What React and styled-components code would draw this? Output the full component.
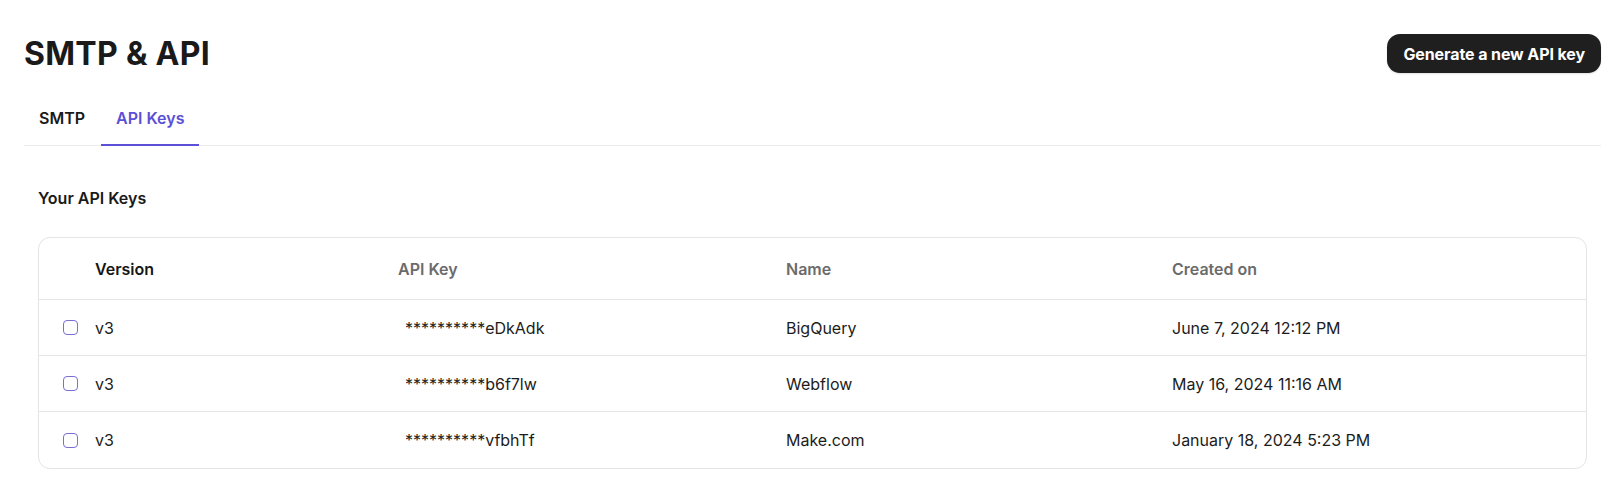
import React from "react";
import styled, { createGlobalStyle } from "styled-components";

const GlobalStyle = createGlobalStyle`
  * { box-sizing: border-box; }
  html, body { margin: 0; padding: 0; background: #ffffff; }
  body {
    font-family: Inter, "Noto Sans", "Liberation Sans", sans-serif;
    color: #1a1a1a;
    -webkit-font-smoothing: antialiased;
  }
`;

const Page = styled.div`
  padding: 34px 20px 32px 24px;
`;

const Header = styled.header`
  display: flex;
  align-items: center;
  justify-content: space-between;
  height: 39px;
`;

const Title = styled.h1`
  margin: 0;
  font-size: 32px;
  line-height: 39px;
  font-weight: 700;
  letter-spacing: 0.3px;
  color: #1a1a1a;
`;

const PrimaryButton = styled.button`
  height: 39px;
  padding: 0 16px;
  border: none;
  border-radius: 13px;
  background: #1f1f1f;
  color: #ffffff;
  font-family: inherit;
  font-size: 16px;
  font-weight: 700;
  letter-spacing: -0.1px;
  cursor: pointer;
  box-shadow: 0 1px 2px rgba(0, 0, 0, 0.12);
`;

const TabList = styled.nav`
  display: flex;
  gap: 1px;
  margin-top: 23px;
  border-bottom: 1px solid #ececec;
`;

const Tab = styled.button`
  padding: 12px 15px 16px;
  margin-bottom: -1px;
  border: none;
  border-bottom: 2px solid ${(p) => (p.$active ? "#5b50d6" : "transparent")};
  background: none;
  font-family: inherit;
  font-size: 16px;
  line-height: 20px;
  font-weight: 600;
  color: ${(p) => (p.$active ? "#5b50d6" : "#1a1a1a")};
  cursor: pointer;
`;

const Section = styled.section`
  padding: 0 14px;
  margin-top: 42px;
`;

const SectionTitle = styled.h2`
  margin: 0;
  font-size: 16px;
  line-height: 20px;
  font-weight: 600;
  color: #1a1a1a;
`;

const Card = styled.div`
  margin-top: 29px;
  border: 1px solid #e4e4e4;
  border-radius: 12px;
  overflow: hidden;
  background: #ffffff;
`;

const Row = styled.div`
  display: grid;
  grid-template-columns: 56px 303px 388px 386px 1fr;
  align-items: center;
  height: ${(p) => (p.$head ? "62px" : "56px")};
  border-bottom: 1px solid #e6e6e6;
  &:last-child { border-bottom: none; }
`;

const HeadCell = styled.div`
  font-size: 16px;
  font-weight: 600;
  color: ${(p) => (p.$strong ? "#161616" : "#6b6b6b")};
`;

const Cell = styled.div`
  font-size: 16px;
  font-weight: 400;
  color: #1c1c1c;
  padding-left: ${(p) => p.$indent || 0}px;
`;

const CheckCell = styled.div`
  display: flex;
  align-items: center;
  padding-left: 24px;
`;

const Checkbox = styled.span`
  display: inline-block;
  width: 15px;
  height: 15px;
  border: 1.5px solid #7a6fd3;
  border-radius: 4px;
  background: #ffffff;
`;

const keys = [
  { version: "v3", key: "**********eDkAdk", name: "BigQuery", created: "June 7, 2024 12:12 PM" },
  { version: "v3", key: "**********b6f7lw", name: "Webflow", created: "May 16, 2024 11:16 AM" },
  { version: "v3", key: "**********vfbhTf", name: "Make.com", created: "January 18, 2024 5:23 PM" },
];

export default function App() {
  return (
    <>
      <GlobalStyle />
      <Page>
        <Header>
          <Title>SMTP &amp; API</Title>
          <PrimaryButton>Generate a new API key</PrimaryButton>
        </Header>
        <TabList>
          <Tab>SMTP</Tab>
          <Tab $active>API Keys</Tab>
        </TabList>
        <Section>
          <SectionTitle>Your API Keys</SectionTitle>
          <Card>
            <Row $head>
              <div />
              <HeadCell $strong>Version</HeadCell>
              <HeadCell>API Key</HeadCell>
              <HeadCell>Name</HeadCell>
              <HeadCell>Created on</HeadCell>
            </Row>
            {keys.map((k) => (
              <Row key={k.key}>
                <CheckCell>
                  <Checkbox />
                </CheckCell>
                <Cell>{k.version}</Cell>
                <Cell $indent={7}>{k.key}</Cell>
                <Cell>{k.name}</Cell>
                <Cell>{k.created}</Cell>
              </Row>
            ))}
          </Card>
        </Section>
      </Page>
    </>
  );
}
